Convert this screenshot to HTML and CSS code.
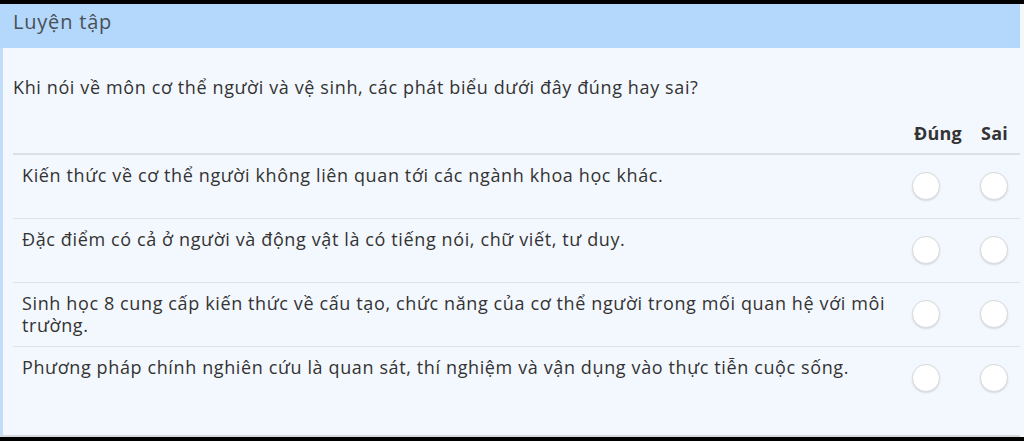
FILE: index.html
```html
<!DOCTYPE html>
<html lang="vi">
<head>
<meta charset="utf-8">
<title>Luyện tập</title>
<link rel="stylesheet" href="styles.css">
</head>
<body>
<div class="frame">
  <div class="panel">
    <div class="panel-head">Luyện tập</div>
    <div class="panel-body">
      <p class="question">Khi nói về môn cơ thể người và vệ sinh, các phát biểu dưới đây đúng hay sai?</p>
      <table class="tf">
        <thead>
          <tr><th class="stmt"></th><th class="opt yes">Đúng</th><th class="opt no">Sai</th></tr>
        </thead>
        <tbody>
          <tr>
            <td class="stmt">Kiến thức về cơ thể người không liên quan tới các ngành khoa học khác.</td>
            <td class="opt yes"><span class="radio"></span></td>
            <td class="opt no"><span class="radio"></span></td>
          </tr>
          <tr>
            <td class="stmt">Đặc điểm có cả ở người và động vật là có tiếng nói, chữ viết, tư duy.</td>
            <td class="opt yes"><span class="radio"></span></td>
            <td class="opt no"><span class="radio"></span></td>
          </tr>
          <tr>
            <td class="stmt">Sinh học 8 cung cấp kiến thức về cấu tạo, chức năng của cơ thể người trong mối quan hệ với môi trường.</td>
            <td class="opt yes"><span class="radio"></span></td>
            <td class="opt no"><span class="radio"></span></td>
          </tr>
          <tr class="last">
            <td class="stmt">Phương pháp chính nghiên cứu là quan sát, thí nghiệm và vận dụng vào thực tiễn cuộc sống.</td>
            <td class="opt yes"><span class="radio"></span></td>
            <td class="opt no"><span class="radio"></span></td>
          </tr>
        </tbody>
      </table>
    </div>
  </div>
</div>
</body>
</html>
```
FILE: styles.css
```css
* { box-sizing: border-box; }
html, body { margin: 0; padding: 0; }
body {
  background: #000;
  width: 1024px;
  height: 441px;
  overflow: hidden;
  font-family: "Open Sans", "Noto Sans", sans-serif;
  color: #333;
}
.frame {
  margin-top: 4px;
  height: 433px;
  background: #f4f7fb;
  padding-right: 4px;
}
.panel {
  height: 433px;
  display: flex;
  flex-direction: column;
  background: #f3f8fe;
  border-bottom: 2px solid #d5d9de;
}
.panel-head {
  height: 44px;
  background: #b3d8fc;
  color: #4a4f55;
  font-size: 20px;
  letter-spacing: 0.8px;
  line-height: 36px;
  padding-left: 13px;
}
.panel-body {
  flex: 1;
  border-left: 3px solid #c2ddf8;
  padding-left: 10px;
}
.question {
  margin: 0;
  padding-top: 27px;
  font-size: 18px;
  letter-spacing: 0.62px;
  line-height: 24px;
  color: #333;
}
.tf {
  width: 100%;
  border-collapse: collapse;
  margin-top: 22px;
  font-size: 18px;
  letter-spacing: 0.62px;
  table-layout: fixed;
}
.tf th {
  font-weight: 700;
  text-align: right;
  padding: 0 0 8px;
  line-height: 24px;
  border-bottom: 2px solid #dcdfe3;
  color: #333;
  letter-spacing: 0.2px;
}
.tf th.yes { width: 68px; }
.tf th.no { width: 58px; padding-right: 12px; }
.tf td {
  border-bottom: 1px solid #dfe3e8;
  height: 64px;
  vertical-align: middle;
}
.tf td.stmt {
  vertical-align: top;
  padding: 9px 4px 0 9px;
  line-height: 22px;
}
.tf td.opt { text-align: center; }
.tf td.yes { padding-right: 6px; }
.tf td.no { padding-left: 6px; }
.tf tr.last td { border-bottom: none; }
.radio {
  display: inline-block;
  width: 28px;
  height: 28px;
  border-radius: 50%;
  background: #fff;
  border: 1px solid #d8dadc;
  box-shadow: 0 1px 2px rgba(0,0,0,0.12);
  vertical-align: middle;
}
```
